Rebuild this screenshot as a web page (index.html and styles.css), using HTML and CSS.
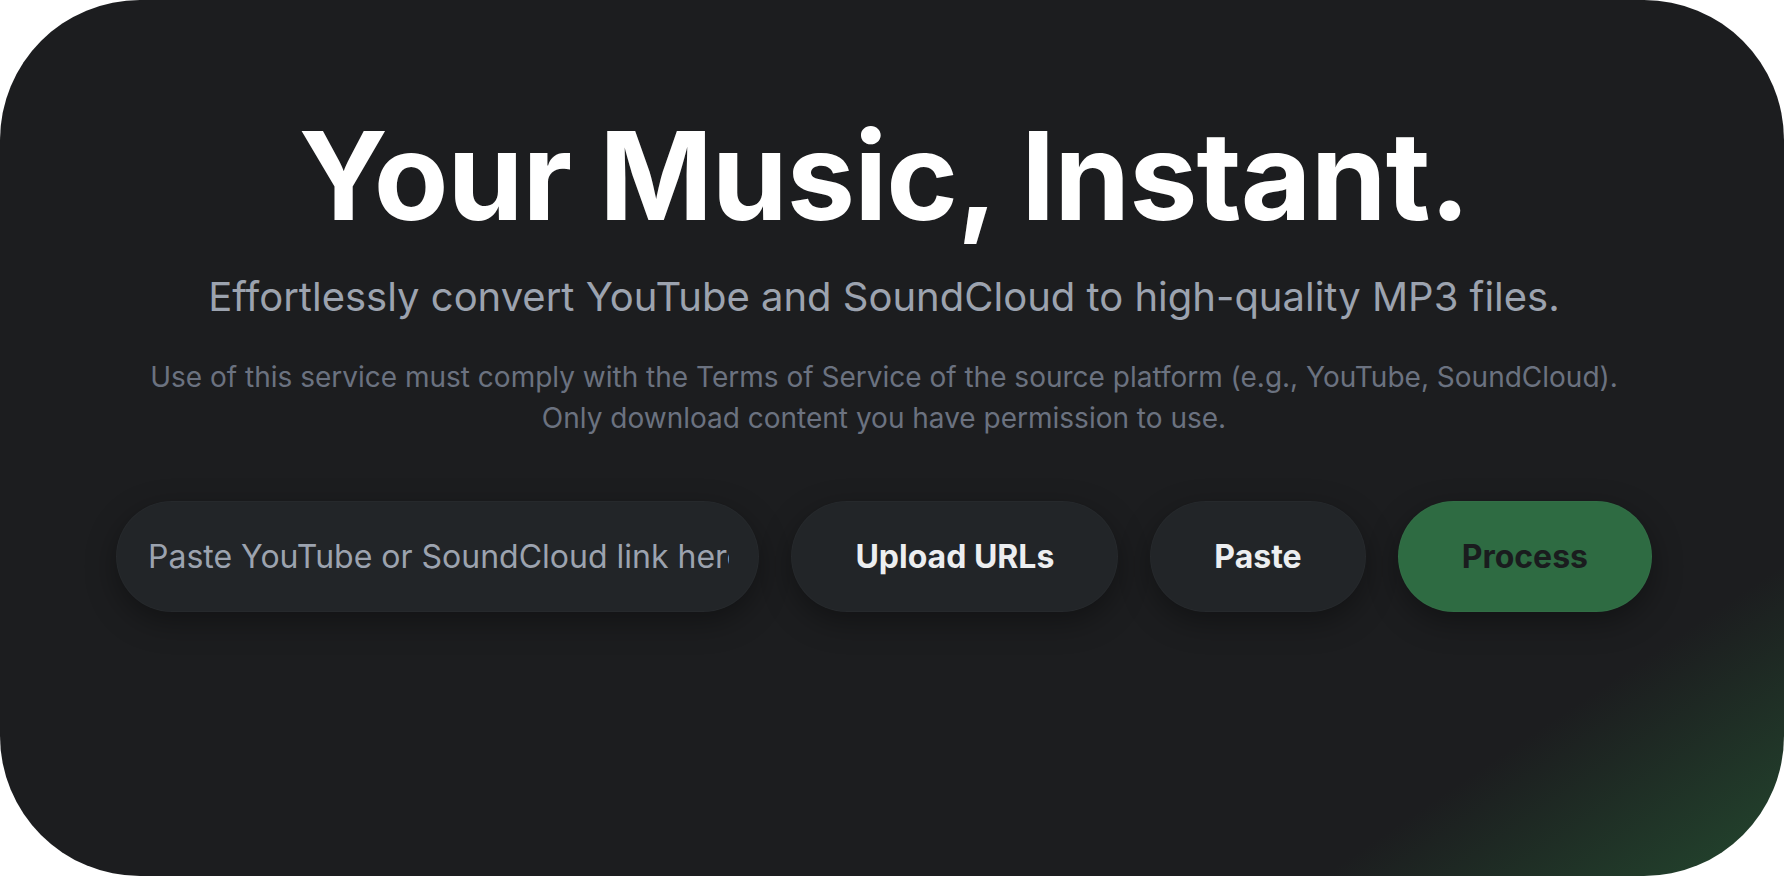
FILE: index.html
```html
<!DOCTYPE html>
<html lang="en">
<head>
<meta charset="utf-8">
<title>Your Music, Instant.</title>
<link rel="stylesheet" href="styles.css">
</head>
<body>
<main class="card">
  <section class="hero">
    <h1 class="title">Your Music, Instant.</h1>
    <p class="subtitle">Effortlessly convert YouTube and SoundCloud to high-quality MP3 files.</p>
    <p class="notice">Use of this service must comply with the Terms of Service of the source platform (e.g., YouTube, SoundCloud).<br>Only download content you have permission to use.</p>
    <form class="bar" onsubmit="return false">
      <input class="link-input" type="text" placeholder="Paste YouTube or SoundCloud link here">
      <button class="btn btn-dark" type="button">Upload URLs</button>
      <button class="btn btn-dark" type="button">Paste</button>
      <button class="btn btn-green" type="submit">Process</button>
    </form>
  </section>
</main>
</body>
</html>
```
FILE: styles.css
```css
* { box-sizing: border-box; }
html, body { margin: 0; padding: 0; background: #ffffff; }
body { font-family: Inter, "Noto Sans", sans-serif; }

.card {
  width: 100%;
  height: 876px;
  border-radius: 140px;
  background-color: #1c1d1f;
  background-image: linear-gradient(146deg, rgba(36, 76, 48, 0) 85%, rgba(36, 76, 48, 0.9) 100%);
  overflow: hidden;
  padding-right: 16px;
}

.hero {
  display: flex;
  flex-direction: column;
  align-items: center;
  padding-top: 116px;
}

.title {
  margin: 0;
  font-size: 122px;
  line-height: 120px;
  font-weight: 700;
  color: #ffffff;
  letter-spacing: -0.008em;
}

.subtitle {
  margin: 39px 0 0;
  font-size: 40px;
  line-height: 44px;
  color: #9ca3af;
  font-weight: 400;
}

.notice {
  margin: 38px 0 0;
  font-size: 28px;
  line-height: 41px;
  color: #6b7280;
  text-align: center;
}

.bar {
  margin-top: 62px;
  width: 1536px;
  display: flex;
  gap: 32px;
}

.link-input {
  flex: 1;
  min-width: 0;
  height: 111px;
  border: none;
  outline: none;
  border-radius: 999px;
  background: #222528;
  padding: 0 30px 0 32px;
  font-family: Inter, "Noto Sans", sans-serif;
  font-size: 32px;
  color: #e5e7eb;
  box-shadow: 0 10px 30px rgba(0, 0, 0, 0.35), inset 0 0 0 1px rgba(255, 255, 255, 0.02);
}
.link-input::placeholder { color: #9ca3af; }

.btn {
  height: 111px;
  border: none;
  border-radius: 999px;
  padding: 0 64px;
  font-family: Inter, "Noto Sans", sans-serif;
  font-size: 32px;
  font-weight: 700;
  cursor: pointer;
  box-shadow: 0 10px 30px rgba(0, 0, 0, 0.35), inset 0 0 0 1px rgba(255, 255, 255, 0.02);
}
.btn-dark { background: #222528; color: #eceef0; }
.btn-green { background: #2e6b42; color: #1a1c1e; }
```
